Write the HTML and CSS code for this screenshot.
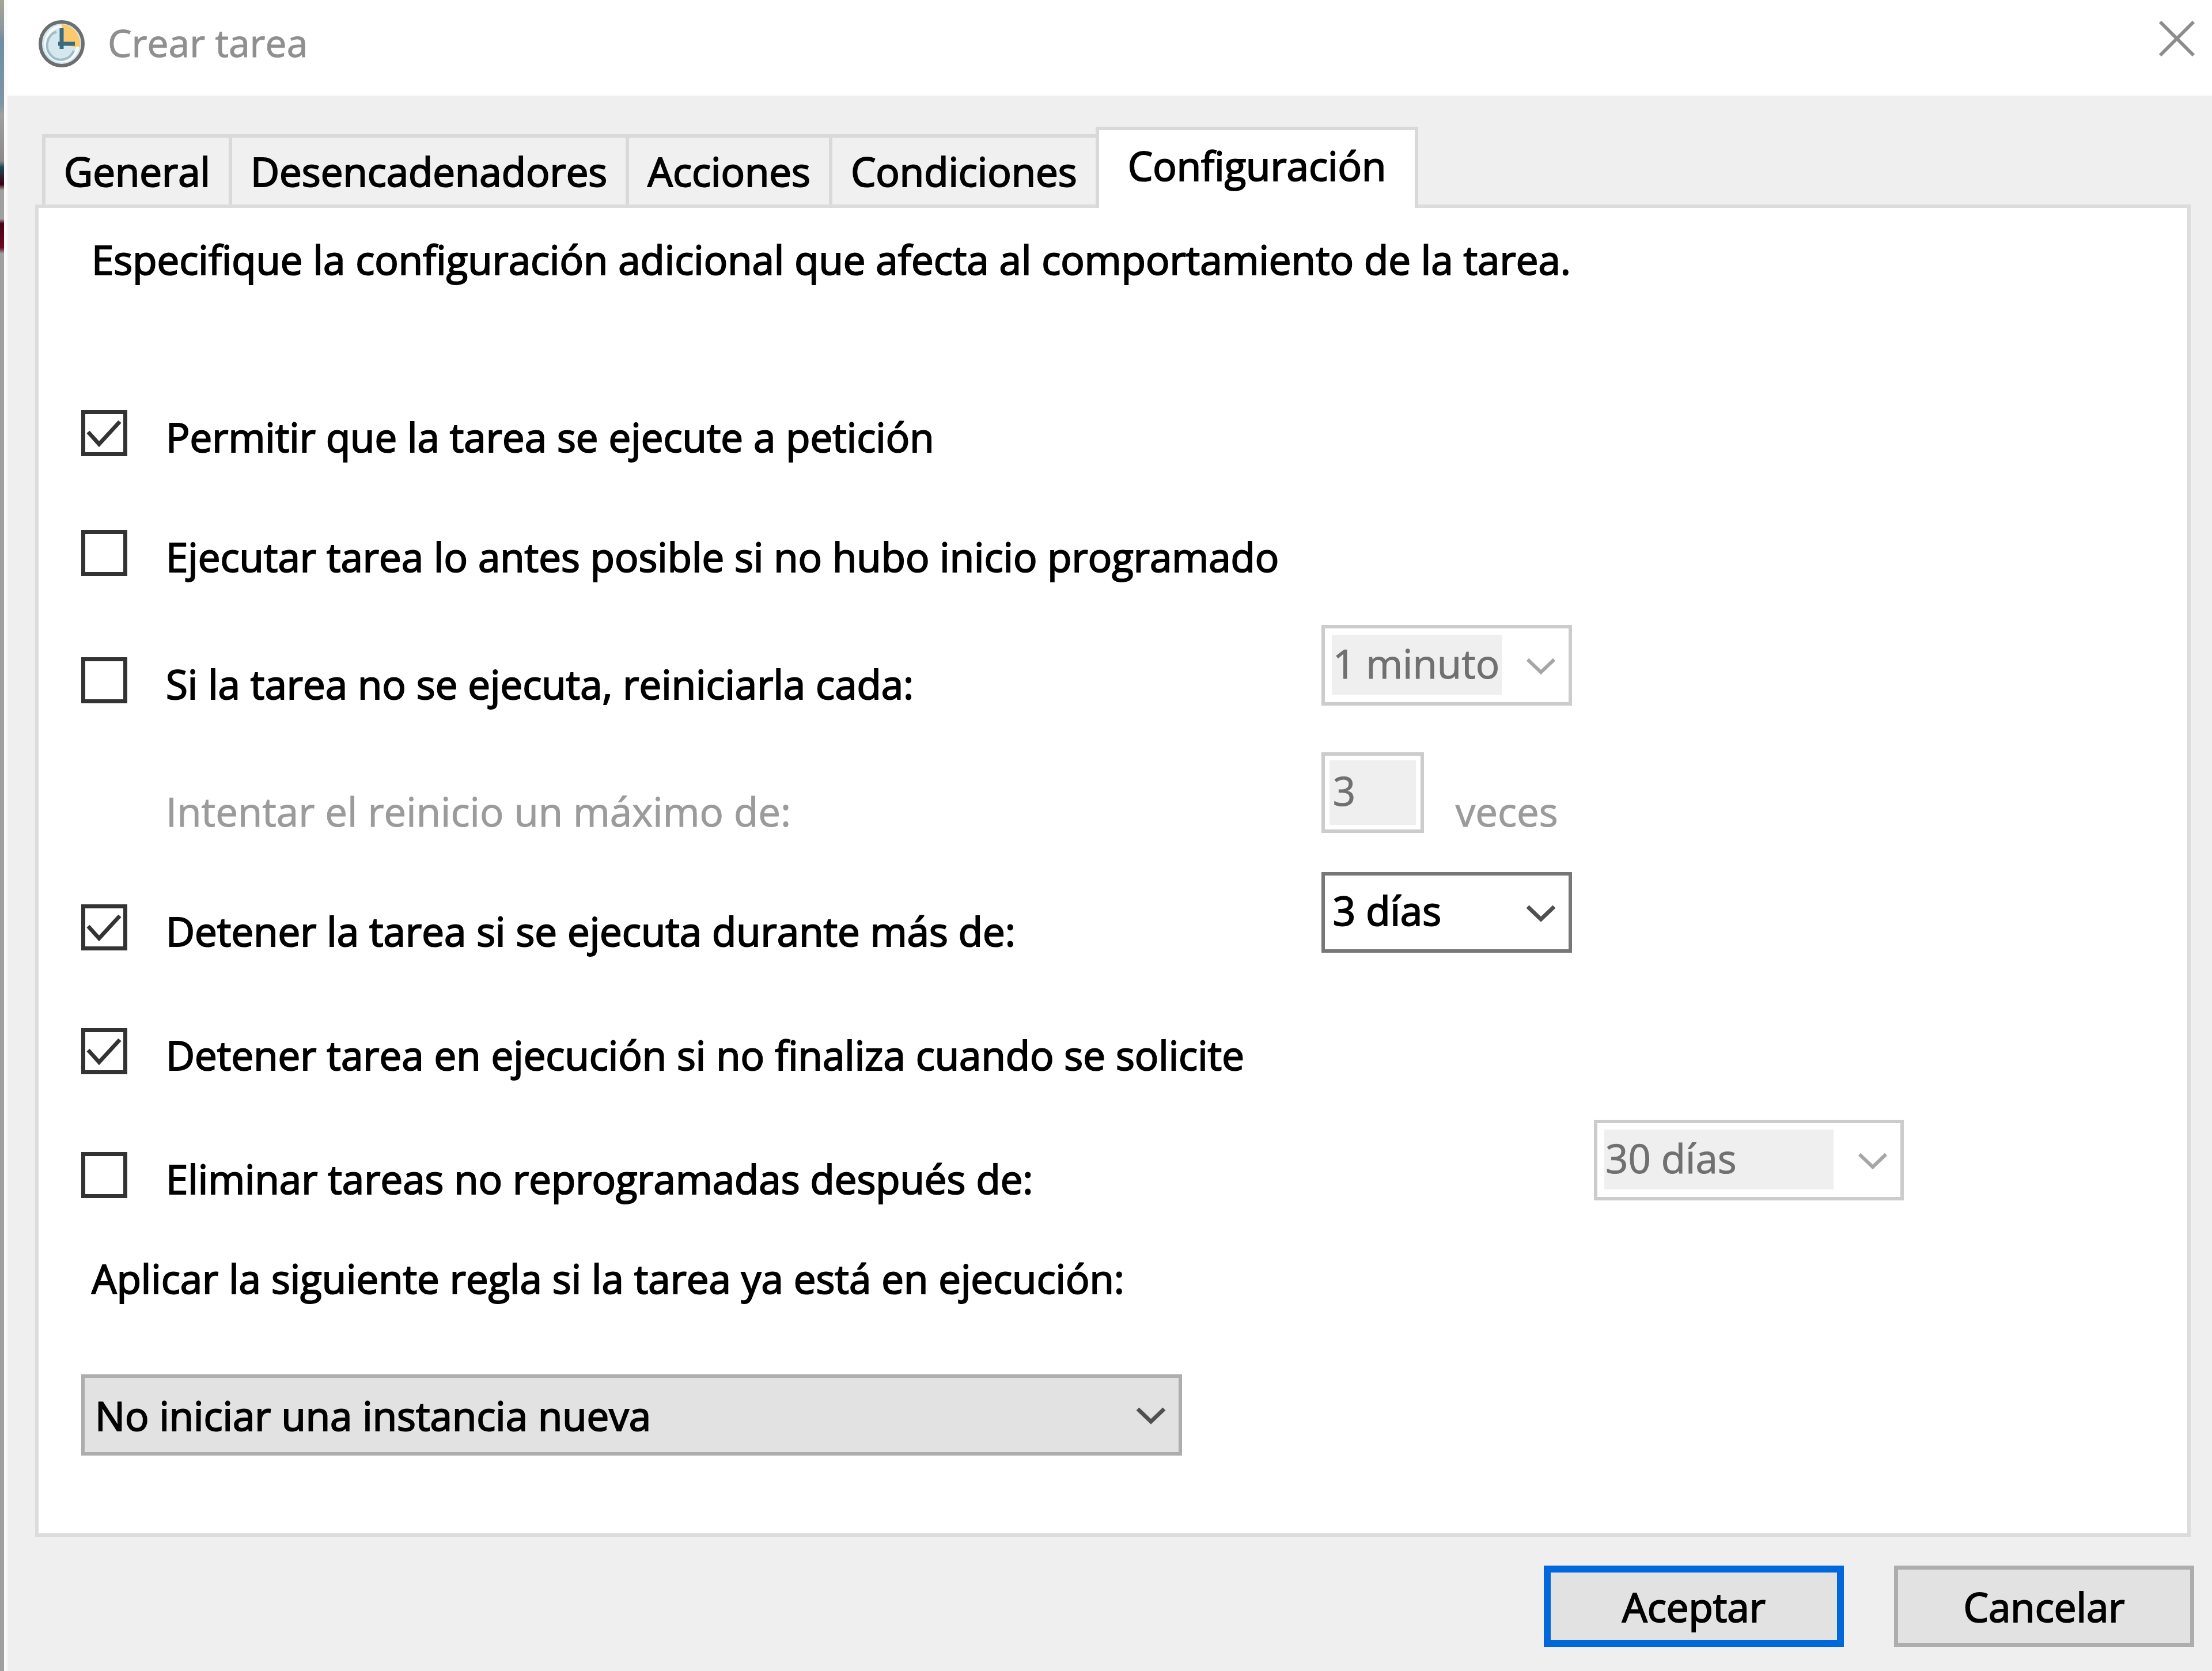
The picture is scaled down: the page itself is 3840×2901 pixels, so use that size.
FILE: index.html
```html
<!DOCTYPE html>
<html lang="es">

<head>
    <meta charset="utf-8">
    <title>Crear tarea</title>
    <link rel="stylesheet" href="styles.css">
</head>

<body>
    <div class="edge"></div>
    <div class="dialog">
        <header class="titlebar">
            <svg class="clock" viewBox="0 0 80 82">
                <ellipse cx="40" cy="41" rx="37" ry="38" fill="#d5e8f0" stroke="#6c6f72" stroke-width="6"/>
                <path d="M40 41V7A33 34 0 0 1 71 49Z" fill="#fbca6c"/>
                <path d="M40 11A28 30 0 1 0 68 46" fill="none" stroke="#f4fbfd" stroke-width="5"/>
                <path d="M31 20A24 25 0 1 0 61 53" fill="none" stroke="#9fbac8" stroke-width="4"/>
                <path d="M40 14V50M34 41H63" fill="none" stroke="#3a6a82" stroke-width="7"/>
            </svg>
            <h1 class="title">Crear tarea</h1>
            <button class="close" type="button" aria-label="Cerrar">
                <svg viewBox="0 0 64 64"><path d="M3 3L61 61M61 3L3 61" fill="none" stroke="#8c8c8c" stroke-width="6"/></svg>
            </button>
        </header>

        <div class="tabs" role="tablist">
            <button class="tab" type="button" role="tab">General</button>
            <button class="tab" type="button" role="tab">Desencadenadores</button>
            <button class="tab" type="button" role="tab">Acciones</button>
            <button class="tab" type="button" role="tab">Condiciones</button>
            <button class="tab active" type="button" role="tab" aria-selected="true">Configuración</button>
        </div>

        <main class="panel">
            <p class="intro">Especifique la configuración adicional que afecta al comportamiento de la tarea.</p>

            <div class="settings">
                <div class="row">
                    <label class="option"><input class="check" type="checkbox" checked>Permitir que la tarea se ejecute a petición</label>
                </div>
                <div class="row">
                    <label class="option"><input class="check" type="checkbox">Ejecutar tarea lo antes posible si no hubo inicio programado</label>
                </div>
                <div class="row retry">
                    <label class="option"><input class="check" type="checkbox">Si la tarea no se ejecuta, reiniciarla cada:</label>
                    <div class="combo">
                        <select class="select" aria-label="Intervalo de reinicio" disabled><option>1 minuto</option></select>
                        <svg class="chevron" viewBox="0 0 52 32"><path d="M3 4L26 26L49 4"/></svg>
                    </div>
                </div>
                <div class="row retry">
                    <label class="option disabled" for="retries">Intentar el reinicio un máximo de:</label>
                    <div class="times">
                        <input class="number" id="retries" type="text" value="3" disabled>
                        <span class="unit">veces</span>
                    </div>
                </div>
                <div class="row">
                    <label class="option"><input class="check" type="checkbox" checked>Detener la tarea si se ejecuta durante más de:</label>
                    <div class="combo">
                        <select class="select" aria-label="Duración máxima"><option>3 días</option></select>
                        <svg class="chevron" viewBox="0 0 52 32"><path d="M3 4L26 26L49 4"/></svg>
                    </div>
                </div>
                <div class="row stop">
                    <label class="option"><input class="check" type="checkbox" checked>Detener tarea en ejecución si no finaliza cuando se solicite</label>
                </div>
                <div class="row stop">
                    <label class="option"><input class="check" type="checkbox">Eliminar tareas no reprogramadas después de:</label>
                    <div class="combo far">
                        <select class="select" aria-label="Plazo de eliminación" disabled><option>30 días</option></select>
                        <svg class="chevron" viewBox="0 0 52 32"><path d="M3 4L26 26L49 4"/></svg>
                    </div>
                </div>
            </div>

            <label class="rule-label" for="rule">Aplicar la siguiente regla si la tarea ya está en ejecución:</label>
            <div class="combo rule">
                <select class="select" id="rule"><option>No iniciar una instancia nueva</option></select>
                <svg class="chevron" viewBox="0 0 52 32"><path d="M3 4L26 26L49 4"/></svg>
            </div>
        </main>

        <footer class="footer">
            <button class="btn primary" type="button">Aceptar</button>
            <button class="btn" type="button">Cancelar</button>
        </footer>
    </div>
</body>

</html>
```
FILE: styles.css
```css
* {
    box-sizing: border-box;
}

body {
    margin: 0;
    min-height: 100vh;
    display: flex;
    background: #efefef;
    color: #000;
    font: 69px/76px "Open Sans", "Noto Sans", sans-serif;
    -webkit-text-stroke: 2px;
}

button,
input,
select {
    margin: 0;
    font: inherit;
    color: inherit;
    border-radius: 0;
}

svg {
    display: block;
}

/* sliver of the desktop behind the window */
.edge {
    width: 7px;
    background: linear-gradient(#a5a596 0, #8d979c 50px, #6f8ea3 70px, #7d95a5 180px, #a0a0a0 200px, #8c8888 280px, #1f4a55 290px, #3a0012 320px, #a0a0a0 330px, #a0a0a0 380px, #4a0018 388px, #6d0a20 430px, #a0a0a0 440px);
}

.dialog {
    flex: 1;
    display: flex;
    flex-direction: column;
    border-left: 6px solid #fafafa;
}

.titlebar {
    display: flex;
    align-items: flex-start;
    height: 166px;
    padding: 35px 29px 0 54px;
    background: #fff;
}

.clock {
    width: 80px;
    height: 82px;
}

.title {
    flex: 1;
    margin: 0 0 0 40px;
    font-size: 66px;
    font-weight: normal;
    color: #8f8f8f;
    -webkit-text-stroke: 1px;
}

.close {
    width: 64px;
    height: 64px;
    padding: 0;
    border: 0;
    background: none;
}

.tabs {
    display: flex;
    align-items: flex-end;
    height: 195px;
    padding-left: 60px;
}

.tab {
    height: 128px;
    padding: 0 32px;
    border: 6px solid #d9d9d9;
    background: #f0f0f0;
}

.tab + .tab {
    border-left: 0;
}

/* covers its neighbour's right border and the panel's top border */
.tab.active {
    height: 141px;
    margin-left: -6px;
    padding: 0 50px 14px;
    border-left: 6px solid #d9d9d9;
    border-bottom: 0;
    background: #fff;
    z-index: 1;
}

.panel {
    margin: -6px 37px 0 48px;
    padding: 51px 60px 135px 74px;
    border: 6px solid #dcdcdc;
    background: #fff;
}

.intro {
    margin: 0;
    padding-left: 18px;
}

.settings {
    display: flex;
    flex-direction: column;
    gap: 68px;
    margin-top: 168px;
}

.row {
    display: grid;
    grid-template-columns: 91fr 20fr 41fr;
    align-items: end;
    min-height: 140px;
}

.row.retry {
    margin-top: 13px;
}

.row.stop {
    margin-top: 7px;
}

.option {
    display: flex;
    align-items: flex-end;
    white-space: nowrap;
}

.option.disabled {
    padding-left: 147px;
    color: #9b9b9b;
    -webkit-text-stroke: 1px;
}

.check {
    appearance: none;
    width: 80px;
    height: 80px;
    margin: 0 67px 4px 0;
    border: 7px solid #333;
    background: #fff;
}

.check:checked {
    background: url("data:image/svg+xml,%3Csvg xmlns='http://www.w3.org/2000/svg' viewBox='0 0 66 66'%3E%3Cpath d='M5 31L24 52L60 13' fill='none' stroke='%23333' stroke-width='7'/%3E%3C/svg%3E") center / 66px 66px no-repeat;
}

.combo {
    position: relative;
    width: 435px;
}

.combo.far {
    grid-column: 3;
    width: 538px;
}

.combo.rule {
    width: 1911px;
    max-width: 100%;
}

.select {
    display: block;
    appearance: none;
    width: 100%;
    height: 140px;
    padding: 0 100px 8px 14px;
    border: 6px solid #777;
    background: #fff;
}

/* disabled combos only shade their text area */
.select:disabled {
    border-color: #ccc;
    background: linear-gradient(#efefef, #efefef) 12px 11px / calc(100% - 128px) 104px no-repeat #fff;
    color: #707070;
    opacity: 1;
    -webkit-text-stroke: 1px;
}

.rule .select {
    height: 141px;
    padding: 0 100px 0 18px;
    border-color: #adadad;
    background: #e2e2e2;
}

.chevron {
    position: absolute;
    top: 56px;
    right: 28px;
    width: 52px;
    height: 32px;
    fill: none;
    stroke: #505050;
    stroke-width: 7;
    pointer-events: none;
}

.select:disabled + .chevron {
    stroke: #a6a6a6;
    stroke-width: 6;
}

.times {
    display: flex;
    align-items: flex-end;
}

.number {
    width: 178px;
    height: 140px;
    padding: 0 14px 8px;
    border: 6px solid #ccc;
    background: #efefef;
    box-shadow: inset 0 0 0 8px #fff;
    color: #707070;
    -webkit-text-stroke: 1px;
}

.unit {
    margin-left: 55px;
    color: #9b9b9b;
    -webkit-text-stroke: 1px;
}

.rule-label {
    display: block;
    margin: 97px 0 0 18px;
}

.combo.rule {
    margin-top: 129px;
}

.footer {
    display: flex;
    justify-content: flex-end;
    gap: 87px;
    padding: 50px 31px 43px;
}

.btn {
    width: 521px;
    height: 141px;
    padding: 0;
    border: 7px solid #adadad;
    background: #e2e2e2;
}

.btn.primary {
    border: 12px solid #0068da;
}
```
